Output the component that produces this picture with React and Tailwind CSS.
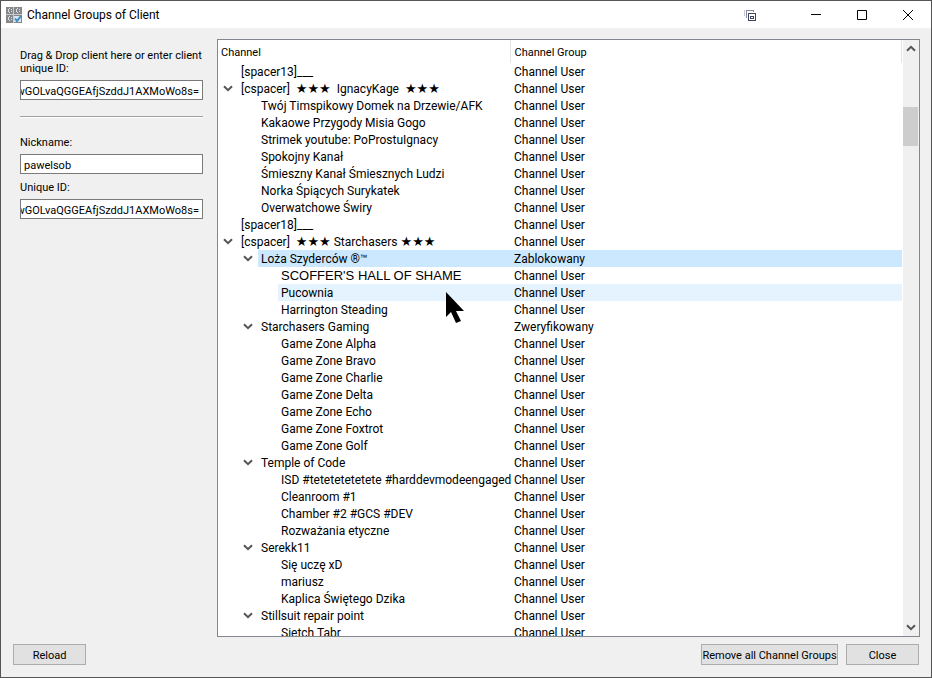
import React from 'react';

const CHANNELS = [
  [0, '[spacer13]___', 'Channel User'],
  [0, '[cspacer]  ★★★  IgnacyKage  ★★★', 'Channel User', true],
  [1, 'Twój Timspikowy Domek na Drzewie/AFK', 'Channel User'],
  [1, 'Kakaowe Przygody Misia Gogo', 'Channel User'],
  [1, 'Strimek youtube: PoProstuIgnacy', 'Channel User'],
  [1, 'Spokojny Kanał', 'Channel User'],
  [1, 'Śmieszny Kanał Śmiesznych Ludzi', 'Channel User'],
  [1, 'Norka Śpiących Surykatek', 'Channel User'],
  [1, 'Overwatchowe Świry', 'Channel User'],
  [0, '[spacer18]___', 'Channel User'],
  [0, '[cspacer]  ★★★ Starchasers ★★★', 'Channel User', true],
  [1, 'Loża Szyderców ®™', 'Zablokowany', true, 'selected'],
  [2, "SCOFFER'S HALL OF SHAME", 'Channel User', false, 'wide'],
  [2, 'Pucownia', 'Channel User', false, 'hover'],
  [2, 'Harrington Steading', 'Channel User'],
  [1, 'Starchasers Gaming', 'Zweryfikowany', true],
  [2, 'Game Zone Alpha', 'Channel User'],
  [2, 'Game Zone Bravo', 'Channel User'],
  [2, 'Game Zone Charlie', 'Channel User'],
  [2, 'Game Zone Delta', 'Channel User'],
  [2, 'Game Zone Echo', 'Channel User'],
  [2, 'Game Zone Foxtrot', 'Channel User'],
  [2, 'Game Zone Golf', 'Channel User'],
  [1, 'Temple of Code', 'Channel User', true],
  [2, 'ISD #tetetetetetete #harddevmodeengaged', 'Channel User'],
  [2, 'Cleanroom #1', 'Channel User'],
  [2, 'Chamber #2 #GCS #DEV', 'Channel User'],
  [2, 'Rozważania etyczne', 'Channel User'],
  [1, 'Serekk11', 'Channel User', true],
  [2, 'Się uczę xD', 'Channel User'],
  [2, 'mariusz', 'Channel User'],
  [2, 'Kaplica Świętego Dzika', 'Channel User'],
  [1, 'Stillsuit repair point', 'Channel User', true],
  [2, 'Sietch Tabr', 'Channel User'],
];

const INDENT = ['pl-0', 'pl-5', 'pl-10'];
const STATE = { selected: 'bg-[#cce8ff]', hover: 'bg-[#e5f3ff]' };

function Chevron({ up = false }) {
  return (
    <svg width="10" height="7" viewBox="0 0 10 7" className={up ? 'rotate-180' : ''} fill="none" stroke="#555" strokeWidth="2" aria-hidden="true">
      <path d="M1 1.2 5 5.2 9 1.2" />
    </svg>
  );
}

function AppIcon() {
  return (
    <svg width="16" height="16" viewBox="0 0 16 16" shapeRendering="crispEdges" aria-hidden="true">
      <path fill="#c9cbcd" d="M0 0h16v16H0z" />
      <path fill="#85888b" d="M0 0h7v7H0zM8 0h8v7H8zM0 8h7v8H0zM8 8h8v8H8z" />
      <path fill="#dfe1e3" d="M2 2h1v3H2zM3 1h1v1H3zM3 5h1v1H3zM5 2h1v1H5zM5 4h1v1H5zM10 2h1v3h-1zM11 1h1v1h-1zM11 5h1v1h-1zM13 2h1v1h-1zM13 4h1v1h-1zM2 10h1v3H2zM3 9h1v1H3zM3 13h1v1H3zM5 10h1v1H5zM5 12h1v1H5z" />
      <g shapeRendering="auto">
        <path fill="#d3e6f3" d="M8 9h7v6H8z" />
        <path d="m9 11.500 2 2.500L15 9" fill="none" stroke="#3a88bd" strokeWidth="2" />
      </g>
    </svg>
  );
}

function Cursor() {
  return (
    <svg width="20" height="32" viewBox="0 0 20 32" className="pointer-events-none absolute left-[445px] top-[291px]" aria-hidden="true">
      <path d="M0 0v25l5-5 5 11 5-2-5-10h8z" fill="#000" />
    </svg>
  );
}

function Field({ id, label, value, clipped = false }) {
  return (
    <div>
      <label htmlFor={id} className="block leading-[13px]">{label}</label>
      <div className="mt-[5px] flex h-5 justify-end overflow-hidden border border-[#7a7a7a] bg-white">
        <input id={id} defaultValue={value} className={`h-[18px] bg-transparent px-[3px] pt-[2px] outline-none ${clipped ? 'w-[240px] shrink-0 text-right' : 'w-full min-w-0'}`} />
      </div>
    </div>
  );
}

function Button({ className, children }) {
  return (
    <button type="button" className={`h-[21px] whitespace-nowrap border border-[#adadad] bg-[#e1e1e1] pt-[2px] text-center leading-[17px] ${className}`}>
      {children}
    </button>
  );
}

function Name({ text }) {
  return text.split(/(★+)/).map((part, i) =>
    part.startsWith('★') ? <span key={i} className="font-['DejaVu_Sans',sans-serif] text-[13px] leading-none">{part}</span> : part
  );
}

function Row({ depth, name, group, open, state }) {
  return (
    <tr className="h-[17px]">
      <td className="p-0">
        <div className={`flex h-[17px] ${INDENT[depth]}`}>
          <span className="flex w-5 shrink-0 items-center justify-center pb-px">{open && <Chevron />}</span>
          <span className={`min-w-0 flex-1 whitespace-pre pl-[3px] pt-px ${STATE[state] || ''} ${state === 'wide' ? "font-['Liberation_Sans',sans-serif] text-[13px]" : ''}`}><Name text={name} /></span>
        </div>
      </td>
      <td className={`p-0 pl-1 pt-px ${STATE[state] || ''}`}>{group}</td>
    </tr>
  );
}

export default function App() {
  return (
    <div className="relative flex h-screen flex-col overflow-hidden border border-[#555] bg-[#f0f0f0] font-['Roboto','DejaVu_Sans',sans-serif] text-[11px] text-black">
      <header className="flex h-[27px] shrink-0 items-center bg-white pl-[5px]">
        <AppIcon />
        <h1 className="pl-[5px] text-[12px] leading-4">Channel Groups of Client</h1>
        <div className="ml-auto flex items-center">
          <button type="button" aria-label="Tray" className="mr-[37px] flex">
            <svg width="12" height="12" viewBox="0 0 12 12" fill="none" shapeRendering="crispEdges">
              <path d="M.5 7V.5" stroke="#c5c8d2" />
              <path d="M3 8.500h-.5v-7h7V3" stroke="#858a9c" />
              <path d="M4.500 4.500h7v7h-7zM6.500 7.500h3v2h-3z" stroke="#3f4660" />
            </svg>
          </button>
          <button type="button" aria-label="Minimize" className="flex h-[26px] w-[46px] items-center justify-center">
            <svg width="10" height="10" viewBox="0 0 10 10"><path d="M0 4.500h10" stroke="#000" /></svg>
          </button>
          <button type="button" aria-label="Maximize" className="flex h-[26px] w-[46px] items-center justify-center">
            <svg width="10" height="10" viewBox="0 0 10 10" fill="none"><path d="M.5.5h9v9h-9z" stroke="#000" /></svg>
          </button>
          <button type="button" aria-label="Close window" className="flex h-[26px] w-[46px] items-center justify-center">
            <svg width="10" height="10" viewBox="0 0 10 10"><path d="m0 0 10 10M10 0 0 10" stroke="#000" /></svg>
          </button>
        </div>
      </header>

      <div className="flex min-h-0 flex-1 pl-[19px] pr-[11px] pt-[11px]">
        <aside className="w-[183px] shrink-0 pt-[10px]">
          <Field id="drop" label="Drag & Drop client here or enter client unique ID:" value="wGOLvaQGGEAfjSzddJ1AXMoWo8s=" clipped />
          <hr className="mb-[18px] mt-4 h-0.5 border-b border-t border-b-white border-t-[#a0a0a0]" />
          <Field id="nick" label="Nickname:" value="pawelsob" />
          <div className="h-[7px]" />
          <Field id="uid" label="Unique ID:" value="wGOLvaQGGEAfjSzddJ1AXMoWo8s=" clipped />
        </aside>

        <main className="ml-[14px] flex min-w-0 flex-1 overflow-hidden border border-[#828790] bg-white">
          <div className="min-w-0 flex-1 overflow-hidden">
            <table className="w-full table-fixed border-collapse text-[12px] leading-4">
              <colgroup>
                <col className="w-[292px]" />
                <col />
              </colgroup>
              <thead>
                <tr className="h-[23px] text-left text-[11px]">
                  <th className="border-r border-[#e5e5e5] p-0 pl-[3px] pt-[2px] font-normal">Channel</th>
                  <th className="border-r border-[#e5e5e5] p-0 pl-1 pt-[2px] font-normal">Channel Group</th>
                </tr>
              </thead>
              <tbody>
                {CHANNELS.map(([depth, name, group, open, state]) => (
                  <Row key={name} depth={depth} name={name} group={group} open={open} state={state} />
                ))}
              </tbody>
            </table>
          </div>
          <div className="ml-px flex w-4 shrink-0 flex-col bg-[#f0f0f0] pr-px">
            <div className="flex h-[17px] items-center justify-center"><Chevron up /></div>
            <div className="mt-[50px] h-[39px] bg-[#cdcdcd]" />
            <div className="mt-auto flex h-[17px] items-center justify-center"><Chevron /></div>
          </div>
        </main>
      </div>

      <footer className="flex shrink-0 gap-2 px-3 pb-3 pt-[7px]">
        <Button className="w-[73px]">Reload</Button>
        <Button className="ml-auto w-[137px]">Remove all Channel Groups</Button>
        <Button className="w-[73px]">Close</Button>
      </footer>
      <Cursor />
    </div>
  );
}
